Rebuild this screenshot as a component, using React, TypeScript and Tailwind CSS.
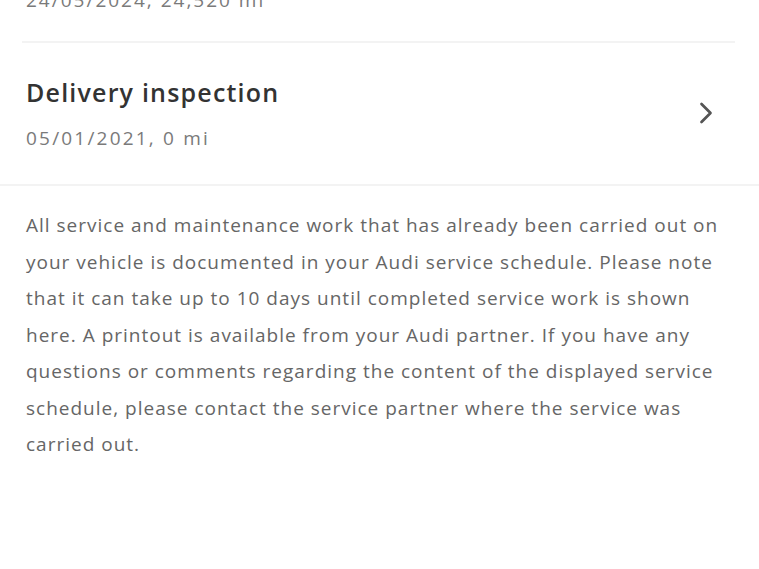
import { ChevronRight } from "lucide-react"

const lines = [
  "All service and maintenance work that has already been carried out on",
  "your vehicle is documented in your Audi service schedule. Please note",
  "that it can take up to 10 days until completed service work is shown",
  "here. A printout is available from your Audi partner. If you have any",
  "questions or comments regarding the content of the displayed service",
  "schedule, please contact the service partner where the service was",
  "carried out.",
]

export default function App() {
  return (
    <div className="h-[569px] w-[759px] overflow-hidden bg-white font-['Open_Sans',sans-serif]">
      {/* previous entry, cut off at top */}
      <div className="-mt-[18px] px-[26px] text-[19px] leading-[36px] tracking-[2px] text-[#7a7a7a]">
        24/05/2024, 24,520 mi
      </div>
      <div className="ml-[22px] mr-[24px] mt-[23px] h-[2px] bg-[#f3f3f3]" />

      {/* service entry */}
      <div className="flex items-center justify-between pl-[26px] pr-[35px] pt-[32px] pb-[33px]">
        <div className="flex flex-col">
          <span className="text-[25px] font-semibold leading-[34px] tracking-[1.2px] text-[#333]">
            Delivery inspection
          </span>
          <span className="mt-[16px] text-[19px] leading-[26px] tracking-[2.2px] text-[#7a7a7a]">
            05/01/2021, 0 mi
          </span>
        </div>
        <ChevronRight className="h-[36px] w-[36px] text-[#555]" strokeWidth={1.8} />
      </div>
      <div className="h-[2px] w-full bg-[#f3f3f3]" />

      {/* info text */}
      <p className="px-[26px] pt-[21px] text-[19px] leading-[36.5px] tracking-[1px] text-[#666]">
        {lines.map((l, i) => (
          <span key={i} className="block whitespace-nowrap">
            {l}
          </span>
        ))}
      </p>
    </div>
  )
}
